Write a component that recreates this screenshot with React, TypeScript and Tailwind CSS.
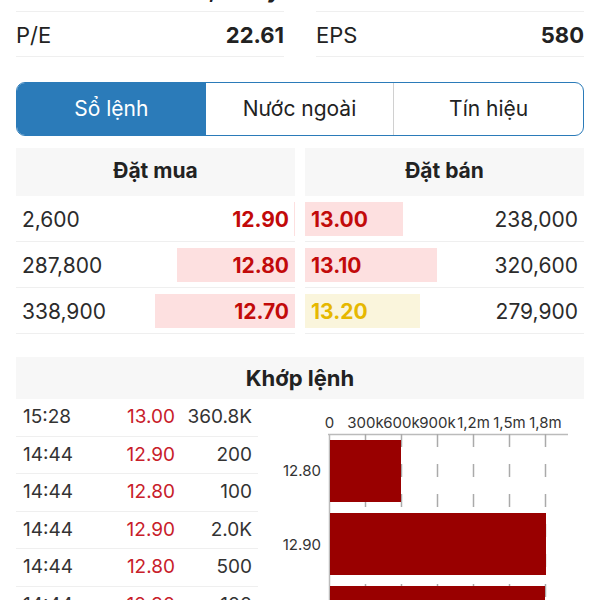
import React from "react";

const buys = [
  { vol: "2,600", price: "12.90", w: 1 },
  { vol: "287,800", price: "12.80", w: 118 },
  { vol: "338,900", price: "12.70", w: 140 },
];
const sells = [
  { vol: "238,000", price: "13.00", w: 98, yellow: false },
  { vol: "320,600", price: "13.10", w: 132, yellow: false },
  { vol: "279,900", price: "13.20", w: 115, yellow: true },
];
const trades = [
  ["15:28", "13.00", "360.8K"],
  ["14:44", "12.90", "200"],
  ["14:44", "12.80", "100"],
  ["14:44", "12.90", "2.0K"],
  ["14:44", "12.80", "500"],
  ["14:44", "12.90", "100"],
];

function Chart() {
  const ticks = [59.5, 95.5, 131.5, 167.5, 203.5, 239.5, 275.5];
  const labels = ["0", "300k", "600k", "900k", "1,2m", "1,5m", "1,8m"];
  return (
    <svg width="330" height="210" viewBox="0 0 330 210" className="block">
      {labels.map((l, i) => (
        <text key={l} x={ticks[i]} y={29} textAnchor="middle" fontSize="15" fill="#333" fontFamily="Inter, sans-serif">
          {l}
        </text>
      ))}
      <line x1={58} y1={35.5} x2={298} y2={35.5} stroke="#bbb" strokeWidth={1.5} />
      <line x1={ticks[0]} y1={35} x2={ticks[0]} y2={210} stroke="#bbb" strokeWidth={1.5} />
      {ticks.slice(1).map((t) => (
        <line key={t} x1={t} y1={35} x2={t} y2={210} stroke="#aaa" strokeWidth={1.5} strokeDasharray="13 17" />
      ))}
      <rect x={60} y={41} width={71} height={62} fill="#990000" />
      <rect x={60} y={114} width={216} height={62} fill="#990000" />
      <rect x={60} y={187} width={215} height={62} fill="#990000" />
      <text x={51} y={77} textAnchor="end" fontSize="15" fill="#333" fontFamily="Inter, sans-serif">12.80</text>
      <text x={51} y={151} textAnchor="end" fontSize="15" fill="#333" fontFamily="Inter, sans-serif">12.90</text>
    </svg>
  );
}

export default function App() {
  return (
    <div className="w-[600px] h-[600px] overflow-hidden bg-white text-[#222]" style={{ fontFamily: "Inter, 'Noto Sans', sans-serif" }}>
      {/* stats rows */}
      <div className="mt-[-31px] px-4 grid grid-cols-2 gap-x-8">
        <div className="h-[43px] flex items-center justify-between border-b border-[#efefef] text-[22px]">
          <span>Vốn hóa</span>
          <span className="font-bold mr-[4px]">4,512 tỷ</span>
        </div>
        <div className="h-[43px] flex items-center justify-between border-b border-[#efefef] text-[22px]">
          <span>Cổ tức</span>
          <span className="font-bold">500</span>
        </div>
        <div className="h-[45px] pt-[3px] flex items-center justify-between border-b border-[#efefef] text-[22px]">
          <span>P/E</span>
          <span className="font-bold">22.61</span>
        </div>
        <div className="h-[45px] pt-[3px] flex items-center justify-between border-b border-[#efefef] text-[22px]">
          <span>EPS</span>
          <span className="font-bold">580</span>
        </div>
      </div>

      {/* tabs */}
      <div className="mx-4 mt-[25px] h-[54px] grid grid-cols-3 border-[1.5px] border-[#2b7bb9] rounded-[9px] overflow-hidden text-[21px]">
        <div className="flex items-center justify-center bg-[#2b7bb9] text-white">Sổ lệnh</div>
        <div className="flex items-center justify-center border-r border-[#d0d0d0] text-[#222]">Nước ngoài</div>
        <div className="flex items-center justify-center text-[#222]">Tín hiệu</div>
      </div>

      {/* order book */}
      <div className="mx-4 mt-[12px] grid grid-cols-2 gap-x-[10px]">
        <div>
          <div className="h-[48px] bg-[#f7f7f7] flex items-center justify-center font-bold text-[21px] pb-[2px]">Đặt mua</div>
          {buys.map((b) => (
            <div key={b.vol} className="relative h-[46px] border-b border-[#efefef] flex items-center justify-between px-[6px] pt-[3px] text-[21px]">
              <div className="absolute right-0 top-[6px] bottom-[5px] bg-[#fde0e0]" style={{ width: b.w }} />
              <span className="relative text-[#2b2b2b]">{b.vol}</span>
              <span className="relative font-bold text-[#c20a0a]">{b.price}</span>
            </div>
          ))}
        </div>
        <div>
          <div className="h-[48px] bg-[#f7f7f7] flex items-center justify-center font-bold text-[21px] pb-[2px]">Đặt bán</div>
          {sells.map((s) => (
            <div key={s.vol} className="relative h-[46px] border-b border-[#efefef] flex items-center justify-between px-[6px] pt-[3px] text-[21px]">
              <div className={`absolute left-0 top-[6px] bottom-[5px] ${s.yellow ? "bg-[#faf5dc]" : "bg-[#fde0e0]"}`} style={{ width: s.w }} />
              <span className={`relative font-bold ${s.yellow ? "text-[#e6b800]" : "text-[#c20a0a]"}`}>{s.price}</span>
              <span className="relative text-[#2b2b2b]">{s.vol}</span>
            </div>
          ))}
        </div>
      </div>

      {/* matched orders */}
      <div className="mx-4 mt-[23px] h-[42px] bg-[#f7f7f7] flex items-center justify-center font-bold text-[22px]">Khớp lệnh</div>
      <div className="flex">
        <div className="ml-4 w-[242px]">
          {trades.map((t, i) => (
            <div key={i} className="h-[37.5px] border-b border-[#efefef] flex items-center pl-[7px] pr-[6px] text-[19px] text-[#333]">
              <span className="w-[60px]">{t[0]}</span>
              <span className="flex-1 text-right text-[#c8202a]">{t[1]}</span>
              <span className="w-[77px] text-right">{t[2]}</span>
            </div>
          ))}
        </div>
        <div className="ml-[12px]">
          <Chart />
        </div>
      </div>
    </div>
  );
}
